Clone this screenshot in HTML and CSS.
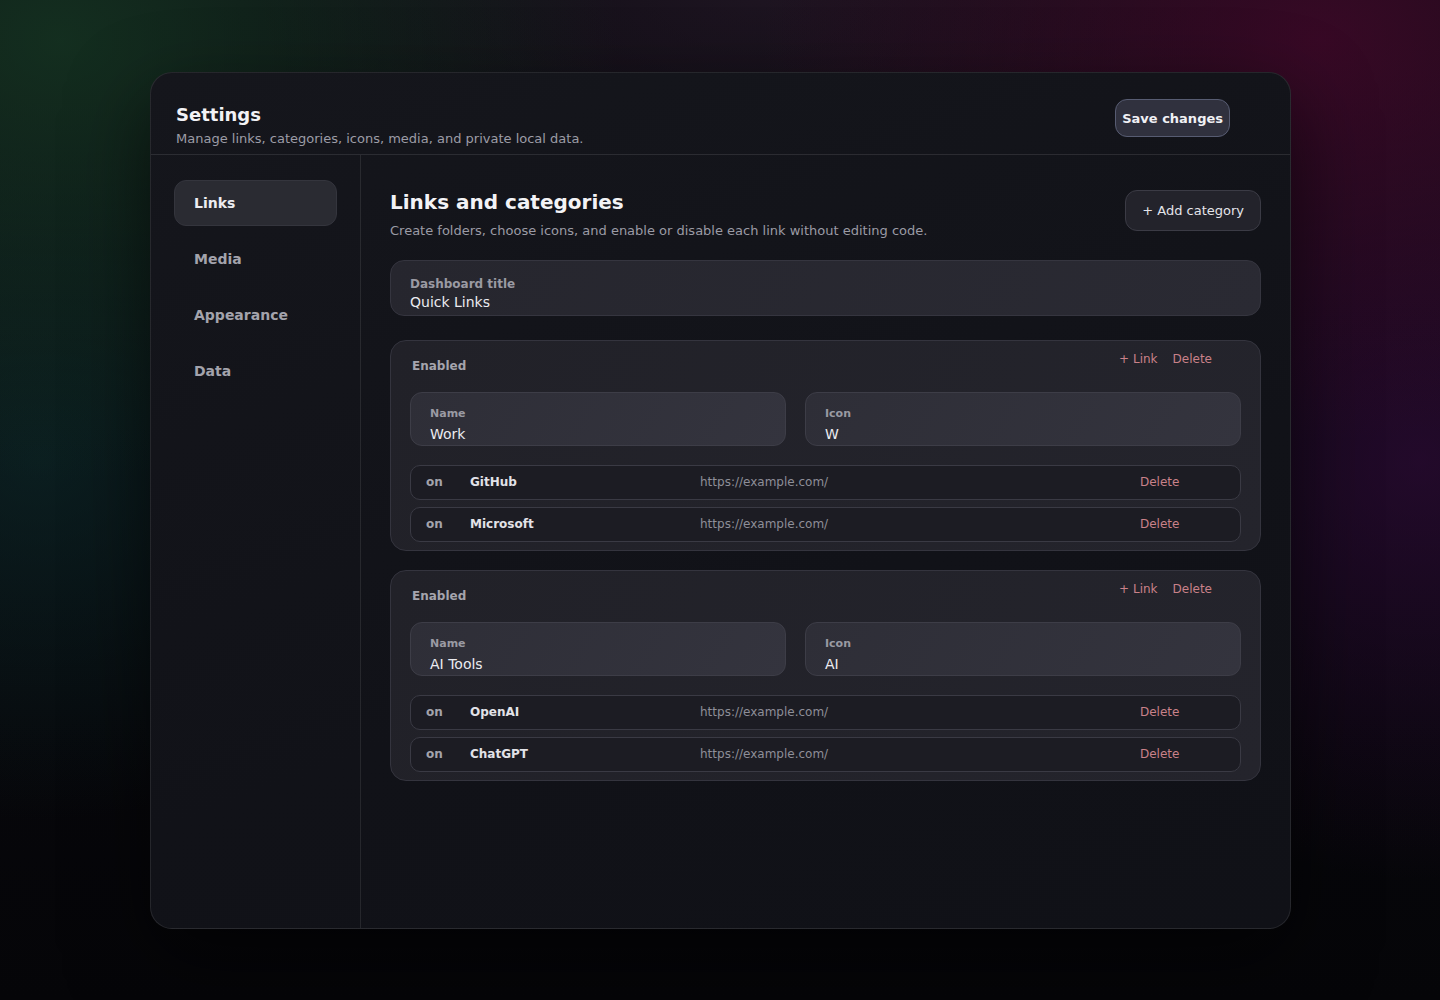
FILE: index.html
```html
<!DOCTYPE html>
<html lang="en">
<head>
  <meta charset="UTF-8">
  <meta name="viewport" content="width=device-width, initial-scale=1.0">
  <title>Settings</title>
  <link rel="stylesheet" href="styles.css">
</head>
<body>
  <div class="panel">
    <div class="panel-head">
      <div>
        <h1 class="title">Settings</h1>
        <p class="subtitle">Manage links, categories, icons, media, and private local data.</p>
      </div>
      <button class="btn-save">Save changes</button>
    </div>

    <div class="panel-body">
      <ul class="side">
        <li class="side-item active">Links</li>
        <li class="side-item">Media</li>
        <li class="side-item">Appearance</li>
        <li class="side-item">Data</li>
      </ul>

      <div class="main">
        <div class="main-head">
          <div>
            <h2 class="heading">Links and categories</h2>
            <p class="desc">Create folders, choose icons, and enable or disable each link without editing code.</p>
          </div>
          <button class="btn-add">+ Add category</button>
        </div>

        <div class="field wide">
          <label>Dashboard title</label>
          <div class="value">Quick Links</div>
        </div>

        <div class="category">
          <div class="cat-head">
            <span class="enabled">Enabled</span>
            <div class="cat-actions">
              <span>+ Link</span>
              <span>Delete</span>
            </div>
          </div>
          <div class="cat-fields">
            <div class="field small">
              <label>Name</label>
              <div class="value">Work</div>
            </div>
            <div class="field small">
              <label>Icon</label>
              <div class="value">W</div>
            </div>
          </div>
          <div class="link-row">
            <span class="on">on</span>
            <span class="link-name">GitHub</span>
            <span class="link-url">https://example.com/</span>
            <span class="link-del">Delete</span>
          </div>
          <div class="link-row">
            <span class="on">on</span>
            <span class="link-name">Microsoft</span>
            <span class="link-url">https://example.com/</span>
            <span class="link-del">Delete</span>
          </div>
        </div>

        <div class="category">
          <div class="cat-head">
            <span class="enabled">Enabled</span>
            <div class="cat-actions">
              <span>+ Link</span>
              <span>Delete</span>
            </div>
          </div>
          <div class="cat-fields">
            <div class="field small">
              <label>Name</label>
              <div class="value">AI Tools</div>
            </div>
            <div class="field small">
              <label>Icon</label>
              <div class="value">AI</div>
            </div>
          </div>
          <div class="link-row">
            <span class="on">on</span>
            <span class="link-name">OpenAI</span>
            <span class="link-url">https://example.com/</span>
            <span class="link-del">Delete</span>
          </div>
          <div class="link-row">
            <span class="on">on</span>
            <span class="link-name">ChatGPT</span>
            <span class="link-url">https://example.com/</span>
            <span class="link-del">Delete</span>
          </div>
        </div>
      </div>
    </div>
  </div>
</body>
</html>
```

FILE: styles.css
```css
*{
  margin: 0;
  padding: 0;
  box-sizing: border-box;
}
li{
  list-style: none;
}
html, body{
  height: 100%;
}
body{
  font-family: "DejaVu Sans", "Noto Sans", sans-serif;
  color: #ececf1;
  padding: 72px 149px 72px 150px;
  background-color: #06060a;
  background-image:
    radial-gradient(ellipse 560px 440px at 60px 40px, rgba(22, 58, 36, 0.75), transparent),
    radial-gradient(ellipse 420px 360px at 40px 460px, rgba(12, 44, 44, 0.6), transparent),
    radial-gradient(ellipse 560px 400px at 1320px 40px, rgba(70, 8, 44, 0.75), transparent),
    radial-gradient(ellipse 420px 420px at 1420px 460px, rgba(52, 10, 62, 0.6), transparent),
    radial-gradient(ellipse 500px 240px at 760px 0px, rgba(50, 30, 50, 0.45), transparent),
    linear-gradient(180deg, #0c0c12 0%, #050508 100%);
}
button{
  font-family: inherit;
  cursor: pointer;
}

.panel{
  height: 857px;
  border-radius: 22px;
  border: 1px solid rgba(255, 255, 255, 0.09);
  background: linear-gradient(160deg, #15161c 0%, #111218 60%, #101117 100%);
  box-shadow: 0 30px 80px rgba(0, 0, 0, 0.55);
  display: flex;
  flex-direction: column;
  overflow: hidden;
}

.panel-head{
  display: flex;
  justify-content: space-between;
  align-items: flex-start;
  padding: 31px 60px 7px 25px;
  border-bottom: 1px solid rgba(255, 255, 255, 0.1);
}
.title{
  font-size: 18px;
  line-height: 22px;
  font-weight: bold;
  color: #f2f2f5;
}
.subtitle{
  margin-top: 5px;
  font-size: 13px;
  line-height: 16px;
  color: #9c9ca6;
}
.btn-save{
  margin-top: -5px;
  height: 38px;
  padding: 0 6px;
  border-radius: 12px;
  border: 1px solid #575c72;
  background: #30313e;
  color: #f0f0f4;
  font-size: 13px;
  font-weight: bold;
}

.panel-body{
  flex: 1;
  display: flex;
}
.side{
  width: 210px;
  padding: 25px 23px;
  border-right: 1px solid rgba(255, 255, 255, 0.09);
  display: flex;
  flex-direction: column;
  gap: 10px;
}
.side-item{
  height: 46px;
  padding: 0 19px 1px;
  display: flex;
  align-items: center;
  border-radius: 12px;
  border: 1px solid transparent;
  font-size: 14px;
  font-weight: bold;
  color: #a3a3ac;
  cursor: pointer;
}
.side-item.active{
  background: #2a2b32;
  border-color: #34353d;
  color: #ededf1;
}

.main{
  flex: 1;
  padding: 35px 29px 0 29px;
}
.main-head{
  display: flex;
  justify-content: space-between;
  align-items: flex-start;
  margin-bottom: 21px;
}
.heading{
  font-size: 20px;
  line-height: 24px;
  font-weight: bold;
  color: #f3f3f6;
}
.desc{
  margin-top: 9px;
  font-size: 13px;
  line-height: 16px;
  color: #9b9ba5;
}
.btn-add{
  height: 41px;
  padding: 0 16px;
  border-radius: 12px;
  border: 1px solid #3b3b45;
  background: #23232b;
  color: #e4e4ea;
  font-size: 13px;
}

.field{
  border: 1px solid #35353f;
  background: linear-gradient(120deg, #26262e, #2a2a33);
}
.field label{
  display: block;
  font-weight: bold;
  color: #9a9aa3;
}
.field .value{
  font-size: 14px;
  line-height: 20px;
  color: #ebebf0;
}
.field.wide{
  height: 56px;
  border-radius: 14px;
  padding: 15px 19px 0;
  margin-bottom: 24px;
}
.field.wide label{
  font-size: 12px;
  line-height: 16px;
}
.field.small{
  height: 54px;
  border-radius: 12px;
  padding: 14px 19px 0;
  background: linear-gradient(120deg, #2e2e37, #34343e);
  border-color: #3d3d47;
}
.field.small label{
  font-size: 11px;
  line-height: 14px;
  margin-bottom: 3px;
}

.category{
  border-radius: 16px;
  border: 1px solid #34343e;
  background: linear-gradient(120deg, #212128, #24242c);
  padding: 10px 19px 8px;
  margin-bottom: 19px;
}
.cat-head{
  display: flex;
  justify-content: space-between;
  align-items: flex-start;
  margin-bottom: 18px;
}
.enabled{
  margin-top: 7px;
  padding-left: 2px;
  font-size: 12px;
  line-height: 16px;
  font-weight: bold;
  color: #a5a5ae;
}
.cat-actions{
  display: flex;
  gap: 15px;
  margin-right: 29px;
  font-size: 12px;
  line-height: 16px;
  color: #c98189;
}
.cat-actions span{
  cursor: pointer;
}
.cat-fields{
  display: grid;
  grid-template-columns: 376px 1fr;
  gap: 19px;
  margin-bottom: 19px;
}

.link-row{
  height: 35px;
  border-radius: 10px;
  border: 1px solid #3a3a44;
  background: #1c1c23;
  padding: 0 15px 2px;
  display: grid;
  grid-template-columns: 44px 230px 440px auto;
  align-items: center;
  font-size: 12px;
  margin-bottom: 7px;
}
.link-row:last-child{
  margin-bottom: 0;
}
.on{
  font-weight: bold;
  color: #a3a3ac;
}
.link-name{
  font-weight: bold;
  color: #e2e2e8;
}
.link-url{
  color: #8e8e98;
}
.link-del{
  color: #c98189;
  cursor: pointer;
}
```
